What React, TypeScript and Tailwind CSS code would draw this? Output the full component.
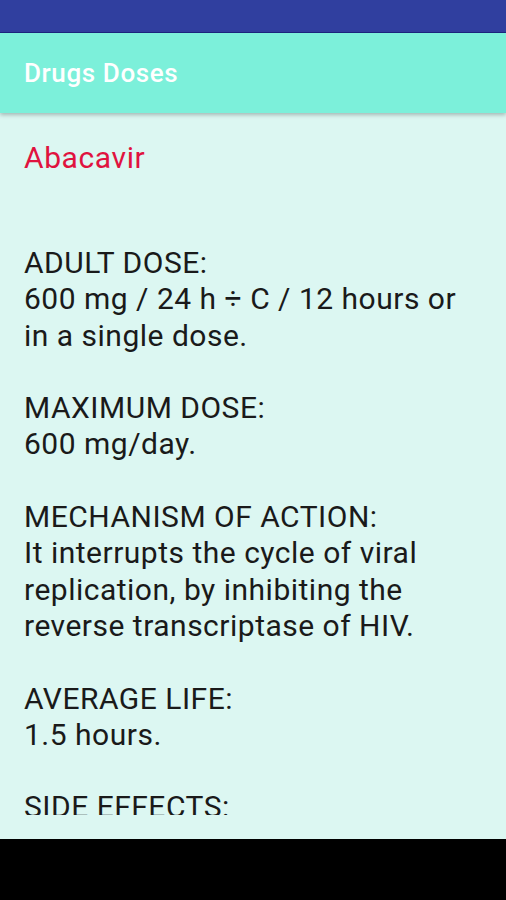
import React from "react";

const font = { fontFamily: "Roboto, 'Noto Sans', sans-serif" };

export default function App() {
  const lines: string[] = [
    "ADULT DOSE:",
    "600 mg / 24 h ÷ C / 12 hours or",
    "in a single dose.",
    "",
    "MAXIMUM DOSE:",
    "600 mg/day.",
    "",
    "MECHANISM OF ACTION:",
    "It interrupts the cycle of viral",
    "replication, by inhibiting the",
    "reverse transcriptase of HIV.",
    "",
    "AVERAGE LIFE:",
    "1.5 hours.",
    "",
    "SIDE EFFECTS:",
  ];
  return (
    <div className="w-[506px] h-[900px] flex flex-col overflow-hidden bg-[#dcf7f2]" style={font}>
      <div className="h-[33px] bg-[#303f9f] border-b border-[#1b2680] shrink-0" />
      <div className="relative z-10 h-[80px] shrink-0 bg-[#7cf0da] flex items-center px-6 shadow-[0_2px_4px_rgba(0,0,0,0.25)]">
        <span className="text-white text-[26px] font-medium tracking-[0.6px]">Drugs Doses</span>
      </div>
      <div className="flex-1 bg-[#dcf7f2] px-6 pt-[27px]">
        <div className="h-[675px] overflow-hidden">
          <div className="text-[#e0133f] text-[30px] leading-[36px] tracking-[0.6px]">Abacavir</div>
          <div className="h-[69px]" />
          <div className="text-[#1a1a1a] text-[30px] leading-[36.3px] tracking-[0.5px]">
            {lines.map((l, i) => (
              <div key={i} className="h-[36.3px] whitespace-nowrap">
                {l}
              </div>
            ))}
          </div>
        </div>
      </div>
      <div className="h-[61px] bg-black shrink-0" />
    </div>
  );
}
